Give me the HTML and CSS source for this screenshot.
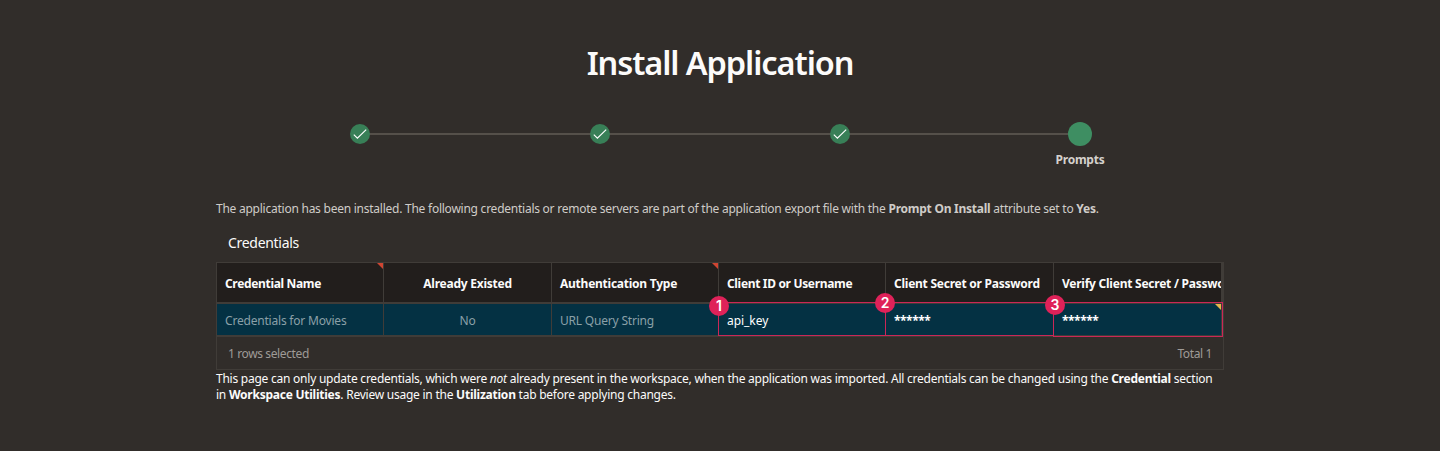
FILE: index.html
```html
<!DOCTYPE html>
<html lang="en">
<head>
<meta charset="utf-8">
<title>Install Application</title>
<link rel="stylesheet" href="styles.css">
</head>
<body>
<main class="page">
  <h1 class="title">Install Application</h1>
  <ol class="steps">
    <li class="step"><span class="dot"><svg class="check" viewBox="0 0 20 20"><path d="M3.8 10.6 7.4 14.2 16.2 5.6"/></svg></span></li>
    <li class="step"><span class="dot"><svg class="check" viewBox="0 0 20 20"><path d="M3.8 10.6 7.4 14.2 16.2 5.6"/></svg></span></li>
    <li class="step"><span class="dot"><svg class="check" viewBox="0 0 20 20"><path d="M3.8 10.6 7.4 14.2 16.2 5.6"/></svg></span></li>
    <li class="step current"><span class="dot"></span><span class="step-label">Prompts</span></li>
  </ol>
  <p class="intro">The application has been installed. The following credentials or remote servers are part of the application export file with the <b>Prompt On Install</b> attribute set to <b>Yes</b>.</p>
  <h2 class="subtitle">Credentials</h2>
  <div class="grid">
    <div class="row head">
      <div class="cell flag tight">Credential Name</div>
      <div class="cell center">Already Existed</div>
      <div class="cell flag">Authentication Type</div>
      <div class="cell tight">Client ID or Username</div>
      <div class="cell">Client Secret or Password</div>
      <div class="cell">Verify Client Secret / Password</div>
    </div>
    <div class="row body">
      <div class="cell">Credentials for Movies</div>
      <div class="cell center">No</div>
      <div class="cell">URL Query String</div>
      <div class="cell edit">api_key<span class="badge b1">1</span></div>
      <div class="cell edit"><span class="stars">******</span><span class="badge b2">2</span></div>
      <div class="cell edit changed"><span class="stars">******</span><span class="badge b3">3</span></div>
    </div>
    <div class="foot"><span>1 rows selected</span><span>Total 1</span></div>
  </div>
  <p class="note">This page can only update credentials, which were <em>not</em> already present in the workspace, when the application was imported. All credentials can be changed using the <b>Credential</b> section<br>in <b>Workspace Utilities</b>. Review usage in the <b>Utilization</b> tab before applying changes.</p>
</main>
</body>
</html>
```

FILE: styles.css
```css
* { box-sizing: border-box; }
body {
  margin: 0;
  background: #312d2a;
  color: #fcfbfa;
  font: 12px/16px "Noto Sans", "Open Sans", sans-serif;
  letter-spacing: -0.245px;
  white-space: nowrap;
}
.page { width: 1008px; margin: 0 auto; padding-top: 39px; }
.title {
  margin: 0;
  height: 49px;
  font-size: 32.5px;
  line-height: 48px;
  font-weight: 600;
  letter-spacing: -1.08px;
  text-align: center;
}
.steps {
  display: grid;
  grid-template-columns: repeat(4, 240px);
  margin: 32px 24px 0;
  padding: 0;
  height: 81px;
  list-style: none;
}
.step { position: relative; display: flex; flex-direction: column; align-items: center; padding-top: 4px; }
.step + .step::before {
  content: "";
  position: absolute;
  top: 13px;
  right: 50%;
  width: 240px;
  height: 2px;
  background: #55504a;
}
.dot { position: relative; z-index: 1; display: block; width: 20px; height: 20px; border-radius: 50%; background: #387f57; }
.check { display: block; width: 20px; height: 20px; fill: none; stroke: #fff; stroke-width: 1.15; }
.current { padding-top: 2px; }
.current .dot { width: 24px; height: 24px; background: #3e8e62; }
.step-label { margin-top: 6px; font-weight: 700; color: #d5d1cd; }
.intro { margin: 0; color: #cfccc8; }
.subtitle {
  margin: 17px 0 0;
  padding-left: 12px;
  height: 28px;
  font-size: 14px;
  line-height: 18px;
  font-weight: 400;
  letter-spacing: -0.3px;
}
.grid { height: 108px; border: 1px solid #403c38; }
.row { display: grid; grid-template-columns: 167px 168px 167px 167px 168px 169px; }
.cell {
  position: relative;
  display: flex;
  align-items: center;
  min-width: 0;
  padding: 2px 0 0 8px;
  border-right: 1px solid #403c38;
}
.cell.center { justify-content: center; padding-left: 0; }
.head { height: 39px; background: #221e1c; font-weight: 700; }
.head .cell:last-child { overflow: hidden; border-right-width: 2px; }
.tight { letter-spacing: -0.33px; }
.flag::after, .changed::after {
  content: "";
  position: absolute;
  top: 0;
  right: 0;
  width: 6px;
  height: 6px;
  background: #cf4532;
  clip-path: polygon(0 0, 100% 0, 100% 100%);
}
.body {
  height: 35px;
  background: #043143;
  border: solid #403c38;
  border-width: 2px 0;
  color: #8ba0a8;
  letter-spacing: -0.2px;
}
.body .cell { padding-top: 3px; }
.body .edit { color: #fff; letter-spacing: -0.05px; }
/* Outline around each editable cell */
.edit::before {
  content: "";
  position: absolute;
  z-index: 1;
  top: -2px;
  right: -1px;
  bottom: -1px;
  left: -1px;
  border: 1px solid #cb2757;
}
.body .changed { border-right: 2px solid #403c38; }
.body .changed::before { right: -2px; bottom: -2px; }
.changed::after { background: #e5b64c; }
.stars { font-weight: 700; letter-spacing: -0.45px; }
.badge {
  position: absolute;
  z-index: 2;
  width: 20px;
  height: 20px;
  border-radius: 50%;
  background: #df2259;
  font: 600 14px/20px Inter, sans-serif;
  letter-spacing: 0;
  text-align: center;
  color: #fff;
}
.b1 { left: -10px; top: -8px; }
.b2 { left: -11px; top: -11px; }
.b3 { left: -9px; top: -9px; }
.foot {
  display: flex;
  justify-content: space-between;
  padding: 9px 11px 0;
  color: #9f9b97;
  letter-spacing: -0.38px;
}
.note { margin: 1px 0 0; letter-spacing: -0.24px; }
```
